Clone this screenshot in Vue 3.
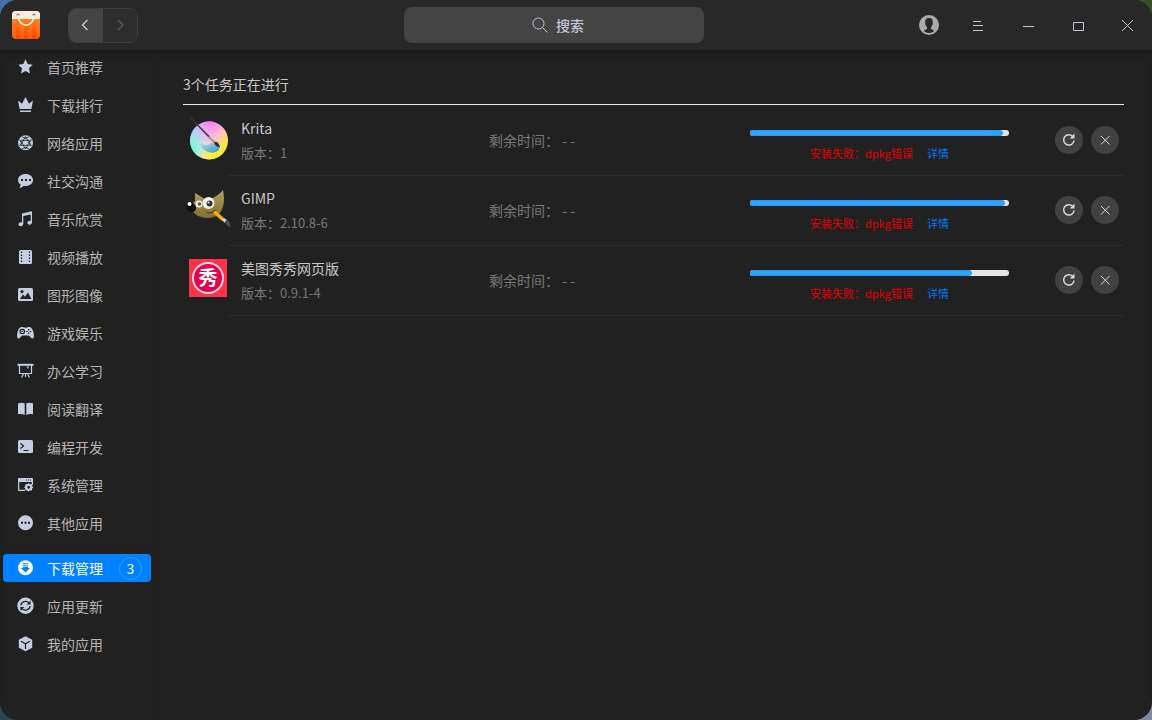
<script setup>
import { ref, reactive, computed } from 'vue';

// solid: filled shape, line: strokes, cut / hole: parts drawn in the row colour
const categories = [
  { id: 'home', name: '首页推荐', solid: 'M8.500 .3l2.200 4.800 5 .6-3.700 3.600 1 5.200-4.500-2.600L4 14.500l1-5.200L1.300 5.700l5-.6z' },
  { id: 'rank', name: '下载排行', solid: 'M1 3.600l4 3.200L8.500 0l3.500 6.800 4-3.200-1.600 8.400H2.600zM3 13.400h11v1.600H3z' },
  { id: 'network', name: '网络应用', solid: 'M8.500 .3a7.500 7.500 0 100 15 7.500 7.500 0 000-15z', cut: 'M8.500 1.500L13.400 10.300H3.600zM8.500 14.100L3.600 5.300h9.800zM2.500 4.500l2 3.300-2 3.300M14.500 4.500l-2 3.300 2 3.300M5 1.800l3.500 1.500L12 1.800M5 13.800l3.500-1.500 3.500 1.500', thin: true },
  { id: 'social', name: '社交沟通', solid: 'M8.500 1C4.300 1 1 3.600 1 7c0 1.800 1 3.500 2.600 4.600.1 1.200-.5 2.300-1.300 3.100 1.600.1 3-.6 4.100-1.800 5.500.8 9.600-1.900 9.600-5.900C16 3.600 12.700 1 8.500 1z', hole: 'M4 6h2v2H4zM8 6h2v2H8zM12 6h2v2h-2z' },
  { id: 'music', name: '音乐欣赏', solid: 'M5 2.400L15 .2v11c0 1.500-1 2.500-2.400 2.500-1.300 0-2.200-.8-2.200-1.900 0-1.300 1.500-2.300 3.300-2V3.500L6.300 5v7.500c0 1.500-1.200 2.700-2.700 2.700-1.300 0-2.100-.8-2.100-1.900C1.500 12 3.100 10.900 5 11.300z' },
  { id: 'video', name: '视频播放', solid: 'M3.500 1h10Q15 1 15 2.500v11q0 1.500-1.500 1.500h-10Q2 15 2 13.500v-11Q2 1 3.500 1z', cut: 'M4.500 2.500v12M12.500 2.500v12', dash: '1.500 1.500' },
  { id: 'image', name: '图形图像', solid: 'M2.500 1h12Q16 1 16 2.500v10q0 1.500-1.500 1.500h-12Q1 14 1 12.500v-10Q1 1 2.500 1z', hole: 'M5 3a1.600 1.600 0 100 3.200A1.600 1.600 0 005 3zM3 12l3-4.500 2 2.300 3-4.300 3.500 6.500z' },
  { id: 'game', name: '游戏娱乐', solid: 'M5 2c1 0 1.500.7 3.500.7S11 2 12 2c2.500 0 4 2.500 4.700 6.500.5 3 .3 5-1.500 5-1.500 0-2-3-4-3H5.800c-2 0-2.500 3-4 3-1.800 0-2-2-1.500-5C1 4.500 2.500 2 5 2z', cut: 'M5.300 4.300a2.200 2.200 0 100 4.400 2.200 2.200 0 000-4.400zM5.300 6v1M11.700 3.900v1.500M11.700 7.600v1.500M9.200 6.500h1.500M12.800 6.500h1.500' },
  { id: 'office', name: '办公学习', solid: 'M.5 .8h16v2H.5z', line: 'M2.500 2v8.500h12V2M8.500 11v3M6.500 11l-2 3.500M10.500 11l2 3.500M11 5.500V4H9.800' },
  { id: 'read', name: '阅读翻译', solid: 'M1 2.500C3 1.400 5.800 1.400 7.700 2.600v11.500C5.800 13 3 12.700 1 13.300zM16 2.500c-2-1.100-4.800-1.100-6.700.1v11.500c1.900-1.100 4.700-1.400 6.700-.8z' },
  { id: 'code', name: '编程开发', solid: 'M2.500 1h12Q16 1 16 2.500v10q0 1.500-1.500 1.500h-12Q1 14 1 12.500v-10Q1 1 2.500 1z', cut: 'M3.500 4.500l3 2.500-3 2.500M6.500 11.500h5' },
  { id: 'system', name: '系统管理', solid: 'M2 1h13q1 0 1 1v3H1V2q0-1 1-1zM11.700 6l1.300 1.200 1.900-.1.200 1.800 1.200 1.400-1.200 1.400-.2 1.800-1.900-.1-1.300 1.200-1.300-1.200-1.900.1-.2-1.800-1.200-1.400 1.200-1.400.2-1.800 1.900.1z', line: 'M1.700 4v9.300H8M15.400 4v4', hole: 'M11.700 8.900a1.400 1.400 0 100 2.800 1.400 1.400 0 000-2.800zM9 2.500h1v1H9zM11 2.500h1v1h-1zM13 2.500h1v1h-1z' },
  { id: 'other', name: '其他应用', solid: 'M8.500 .3a7.500 7.500 0 100 15 7.500 7.500 0 000-15z', hole: 'M4 6.800h2v2H4zM7.500 6.800h2v2h-2zM11 6.800h2v2h-2z' },
];

const manage = [
  { id: 'download', name: '下载管理', solid: 'M8.500 .3a7.500 7.500 0 100 15 7.500 7.500 0 000-15z', hole: 'M6 3.300h5v1H6zM6 5.200h5v1H6zM6 7h5v1h2l-4.500 4.500L4 8h2z' },
  { id: 'update', name: '应用更新', solid: 'M8.500 -.5a8.200 8.200 0 100 16.400 8.200 8.200 0 000-16.400z', cut: 'M3.800 7.300C4.300 3.600 9.300 1.900 12 4.800M13.200 8.100c-.5 3.700-5.500 5.400-8.200 2.500', hole: 'M13.500 2.500v4H9.700zM3.500 12.900v-4h3.800z' },
  { id: 'mine', name: '我的应用', solid: 'M8.500 .3l6.700 3.500v8L8.500 15.300l-6.700-3.500v-8z', cut: 'M4 5.300l4.500 2.500L13 5.300M8.500 7.800V13' },
];

const groups = [categories, manage];
const active = ref('download');
const keyword = ref('');

const tasks = reactive([
  { id: 'krita', name: 'Krita', version: '1', progress: 97.7 },
  { id: 'gimp', name: 'GIMP', version: '2.10.8-6', progress: 98.5 },
  { id: 'meitu', name: '美图秀秀网页版', version: '0.9.1-4', progress: 85.7 },
]);
const taskCount = computed(() => tasks.length);

const retry = (task) => {
  task.progress = 0;
}
const removeTask = (index) => {
  tasks.splice(index, 1);
}
</script>

<template>
  <div class="window">
    <header class="titlebar">
      <div class="left">
        <svg class="logo" viewBox="0 0 28 28">
          <defs>
            <linearGradient id="bag" x1="0" y1="0" x2="0" y2="1">
              <stop offset="0" stop-color="#ff9330" />
              <stop offset="1" stop-color="#ff5a0c" />
            </linearGradient>
            <linearGradient id="stripe" x1="0" y1="0" x2="0" y2="1">
              <stop offset="0" stop-color="#ff7e14" />
              <stop offset="1" stop-color="#ff4300" />
            </linearGradient>
          </defs>
          <rect width="28" height="28" rx="4" fill="url(#bag)" />
          <path d="M4 8h4v20H4zM12 8h4v20h-4zM20 8h4v20h-4z" fill="url(#stripe)" />
          <path d="M0 8V4q0-4 4-4h20q4 0 4 4v4z" fill="#faecdc" />
          <circle cx="6" cy="4" r="1.500" fill="#8f7b6c" />
          <circle cx="22" cy="4" r="1.500" fill="#8f7b6c" />
          <path d="M6 5c0 12 16 12 16 0" fill="none" stroke="#e8cdb4" stroke-width="1" />
          <path d="M6 4c0 13.500 16 13.500 16 0" fill="none" stroke="#fff8ee" stroke-width="1.500" />
        </svg>
        <div class="nav">
          <button type="button" aria-label="后退">
            <svg viewBox="0 0 12 12"><path d="M7.500 1l-5 5 5 5" /></svg>
          </button>
          <button type="button" aria-label="前进" disabled>
            <svg viewBox="0 0 12 12"><path d="M4 1l5 5-5 5" /></svg>
          </button>
        </div>
      </div>

      <label class="search">
        <svg viewBox="0 0 16 16"><circle cx="6.500" cy="6.500" r="5.500" /><path d="M10.500 10.500l5 5" /></svg>
        <input type="text" v-model="keyword" placeholder="搜索" aria-label="搜索">
      </label>

      <div class="controls">
        <button type="button" aria-label="账户">
          <svg class="avatar" viewBox="0 0 20 20">
            <circle cx="10" cy="10" r="10" fill="#aaaaaa" />
            <path d="M10 3C7 3 6 5 6.300 7.500 5.800 8.500 6.300 10 7 10.300c.3 1.500 1 2 1.300 2.700-.3 1.500-2.300 1.600-3.500 3C6.300 17.300 8 18 10 18s3.700-.7 5.200-2c-1.200-1.400-3.200-1.500-3.500-3 .3-.7 1-1.200 1.300-2.700.7-.3 1.200-1.800.7-2.800C14 5 13 3 10 3z" fill="#282828" />
          </svg>
        </button>
        <button type="button" aria-label="菜单">
          <svg viewBox="0 -1 16 16"><path d="M4 3.500h8M4 7.500h10M4 12.500h10" /></svg>
        </button>
        <button type="button" aria-label="最小化">
          <svg viewBox="0 -1 16 16"><path d="M4 8.500h11" /></svg>
        </button>
        <button type="button" aria-label="最大化">
          <svg viewBox="0 -1 16 16"><path d="M4.500 4.500h10v8h-10z" /></svg>
        </button>
        <button type="button" aria-label="关闭">
          <svg viewBox="0 -1 16 16"><path d="M3 2l11 11M14 2L3 13" /></svg>
        </button>
      </div>
    </header>

    <div class="body">
      <nav class="sidebar">
        <ul v-for="(group, index) in groups" :key="index">
          <li v-for="item in group" :key="item.id">
            <button type="button" class="entry" :class="{ active: active === item.id }" @click="active = item.id">
              <svg viewBox="0 -1 18 18">
                <path v-if="item.solid" class="solid" :d="item.solid" />
                <path v-if="item.line" class="line" :d="item.line" />
                <path v-if="item.cut" class="cut" :class="{ thin: item.thin }" :d="item.cut" :stroke-dasharray="item.dash" />
                <path v-if="item.hole" class="hole" :d="item.hole" />
              </svg>
              <span>{{ item.name }}</span>
              <span v-if="item.id === 'download' && taskCount" class="badge">{{ taskCount }}</span>
            </button>
          </li>
        </ul>
      </nav>

      <main class="content">
        <h1>{{ taskCount }}个任务正在进行</h1>
        <ul class="tasks">
          <li v-for="(task, index) in tasks" :key="task.id" class="task">
            <svg v-if="task.id === 'krita'" class="app-icon" viewBox="0 0 48 48">
              <defs>
                <linearGradient id="kritaBase" x1="0" y1=".3" x2="1" y2=".8">
                  <stop offset="0" stop-color="#8bdcff" />
                  <stop offset=".35" stop-color="#d8dcee" />
                  <stop offset=".65" stop-color="#ffd9a8" />
                  <stop offset="1" stop-color="#fff000" />
                </linearGradient>
                <radialGradient id="kritaPink" cx=".55" cy="0" r=".65">
                  <stop offset="0" stop-color="#ff74f4" />
                  <stop offset="1" stop-color="#ff9cf0" stop-opacity="0" />
                </radialGradient>
                <radialGradient id="kritaMint" cx="0" cy=".75" r=".5">
                  <stop offset="0" stop-color="#5cffd0" />
                  <stop offset="1" stop-color="#8cffd0" stop-opacity="0" />
                </radialGradient>
                <radialGradient id="kritaYellow" cx=".65" cy="1" r=".5">
                  <stop offset="0" stop-color="#fff500" />
                  <stop offset="1" stop-color="#fff36a" stop-opacity="0" />
                </radialGradient>
                <linearGradient id="kritaPaint" x1="0" y1="0" x2="1" y2="1">
                  <stop offset="0" stop-color="#c4d8e8" />
                  <stop offset="1" stop-color="#2a9bd0" />
                </linearGradient>
              </defs>
              <circle cx="26" cy="24.500" r="19" fill="url(#kritaBase)" />
              <circle cx="26" cy="24.500" r="19" fill="url(#kritaMint)" />
              <circle cx="26" cy="24.500" r="19" fill="url(#kritaYellow)" />
              <circle cx="26" cy="24.500" r="19" fill="url(#kritaPink)" />
              <path d="M17 26c1 3 7 4 10 2 2-2 5-2 7 0l3 3c-1 6-9 7-14 4-4-2-6-5-6-9z" fill="url(#kritaPaint)" />
              <path d="M6 1l2 .5 19 19-1 1.500z" fill="#49353b" />
              <path d="M26 20l6 5-1.500 2-5.500-5.500z" fill="#a09691" />
              <path d="M31 26c3-1 5 1 6 5-3 0-5-1-6-5z" fill="#392d38" />
            </svg>

            <svg v-else-if="task.id === 'gimp'" class="app-icon" viewBox="0 0 48 48">
              <defs>
                <linearGradient id="gimpFur" x1="0" y1="0" x2="0" y2="1">
                  <stop offset="0" stop-color="#b4a25f" />
                  <stop offset="1" stop-color="#806e31" />
                </linearGradient>
              </defs>
              <path d="M12 7l10 6c6 1 13-3 18-9 2 10 1 19-4 24-6 6-19 5-25-1-3-3-4-6-3-9l4-3z" fill="url(#gimpFur)" />
              <path d="M3 19c1-3 4-4 7-2 4 3 4 8 0 9-4 1-7-3-7-7z" fill="#0e1113" />
              <circle cx="6.500" cy="18" r="2" fill="#ffffff" />
              <circle cx="16" cy="18" r="3.500" fill="#eeeeec" />
              <circle cx="16.500" cy="18" r="1.800" fill="#555753" />
              <circle cx="25.500" cy="17" r="6" fill="#f2f3f1" />
              <circle cx="26.500" cy="17.500" r="3" fill="#2e3436" />
              <circle cx="25.500" cy="16.500" r="1" fill="#ffffff" />
              <path d="M23 26c4 2 7 1 10-2" fill="none" stroke="#4d431f" stroke-width="1.200" />
              <path d="M30 27l2.500-2.500 8.500 7.500-2 3z" fill="#f3ac13" />
              <path d="M39 34l2-2 3 2-2 3z" fill="#dedede" />
              <path d="M42 35c3-2 5 1 6 6-4-1-6-3-6-6z" fill="#4c5055" />
            </svg>

            <svg v-else class="app-icon" viewBox="0 0 48 48">
              <rect x="6" y="3" width="38" height="38" fill="#ff3347" />
              <circle cx="25" cy="22" r="15" fill="#e5004f" stroke="#ffdce2" stroke-width="2" />
              <text x="25" y="29" text-anchor="middle">秀</text>
            </svg>

            <div class="row">
              <div class="info">
                <h2>{{ task.name }}</h2>
                <p>版本：{{ task.version }}</p>
              </div>
              <div class="remain">剩余时间： - -</div>
              <div class="status">
                <div class="bar" role="progressbar" :aria-valuenow="task.progress" aria-valuemin="0" aria-valuemax="100">
                  <div class="fill" :style="{ width: task.progress + '%' }"></div>
                </div>
                <div class="message">
                  <span>安装失败：dpkg错误</span>
                  <a href="#">详情</a>
                </div>
              </div>
              <div class="actions">
                <button type="button" aria-label="重试" @click="retry(task)">
                  <svg viewBox="0 0 14 14"><path d="M12 7.500A5.200 5.200 0 1 1 10.500 3.200" /><path class="tip" d="M12.500 .5v5H7.800z" /></svg>
                </button>
                <button type="button" aria-label="移除" @click="removeTask(index)">
                  <svg viewBox="0 0 14 14"><path class="thin" d="M3 3l8.500 8.500M11.500 3L3 11.500" /></svg>
                </button>
              </div>
            </div>
          </li>
        </ul>
      </main>
    </div>
  </div>
</template>

<style>
body {
  margin: 0;
  background:
    linear-gradient(90deg, #4070a8 50%, #3c4f24 50%) top / 100% 50% no-repeat,
    linear-gradient(90deg, #29474f 50%, #7c8b9e 50%) bottom / 100% 50% no-repeat;
}
</style>

<style scoped>
.window {
  display: flex;
  flex-direction: column;
  min-height: 100vh;
  border-radius: 18px;
  overflow: hidden;
  background: #212121;
  color: #c0c6d4;
  font-family: "Noto Sans CJK SC", sans-serif;
  font-size: 14px;
  line-height: 20px;
}

button {
  padding: 0;
  border: none;
  background: none;
  color: inherit;
  font: inherit;
  cursor: pointer;
}

ul {
  margin: 0;
  padding: 0;
  list-style: none;
}

svg {
  display: block;
  flex-shrink: 0;
}

.titlebar {
  display: grid;
  grid-template-columns: 404fr 300px 448fr;
  align-items: center;
  height: 50px;
  background: #282828;
}

.left {
  display: flex;
  align-items: center;
  gap: 28px;
  padding-left: 12px;
}

.logo {
  width: 28px;
  height: 28px;
}

.nav {
  display: flex;
  box-sizing: border-box;
  width: 70px;
  height: 35px;
  border: 1px solid #3d3d3d;
  border-radius: 8px;
  overflow: hidden;
}

.nav button {
  display: flex;
  flex: 1;
  align-items: center;
  justify-content: center;
  background: #444444;
}

.nav button:disabled {
  background: #2d2d2d;
  color: #555555;
}

.nav svg {
  width: 12px;
  height: 12px;
  fill: none;
  stroke: currentColor;
  stroke-width: 1.5;
}

.search {
  display: flex;
  align-items: center;
  justify-content: center;
  gap: 8px;
  box-sizing: border-box;
  height: 36px;
  padding-left: 8px;
  border-radius: 8px;
  background: #444444;
}

.search svg {
  width: 16px;
  height: 16px;
  fill: none;
  stroke: #c0c6d4;
}

.search input {
  field-sizing: content;
  min-width: 28px;
  max-width: 240px;
  padding: 0;
  border: none;
  outline: none;
  background: none;
  color: #c0c6d4;
  font: inherit;
  font-weight: 500;
}

.search input::placeholder {
  color: #c0c6d4;
  opacity: 1;
}

.controls {
  display: flex;
  justify-content: flex-end;
}

.controls button {
  display: flex;
  align-items: center;
  justify-content: center;
  width: 50px;
  height: 50px;
}

.controls svg {
  width: 16px;
  height: 16px;
  fill: none;
  stroke: #c0c6d4;
}

.controls .avatar {
  width: 20px;
  height: 20px;
  margin-left: 4px;
  stroke: none;
}

.body {
  display: flex;
  flex: 1;
  box-shadow: inset 0 6px 6px -4px #181818;
}

.sidebar {
  box-sizing: border-box;
  width: 155px;
  padding-top: 3px;
  border-right: 1px solid #1e1e1e;
}

.sidebar ul {
  display: flex;
  flex-direction: column;
  gap: 10px;
}

.sidebar ul + ul {
  margin-top: 10px;
  padding-top: 6px;
  border-top: 1px solid #1e1e1e;
}

.sidebar li {
  display: flex;
  padding: 0 3px;
}

.entry {
  --back: #212121;
  display: flex;
  flex: 1;
  align-items: center;
  gap: 12px;
  height: 28px;
  padding: 0 9px 0 14px;
  border-radius: 4px;
  color: #b4b4b4;
}

.entry svg {
  width: 18px;
  height: 18px;
  overflow: visible;
  color: #c5cde0;
}

.entry.active {
  --back: #0081ff;
  background: #0081ff;
  color: #ffffff;
}

.entry.active svg {
  color: #ffffff;
}

.solid {
  fill: currentColor;
}

.line {
  fill: none;
  stroke: currentColor;
  stroke-width: 1.2;
}

.cut {
  fill: none;
  stroke: var(--back);
  stroke-width: 1.2;
}

.cut.thin {
  stroke-width: 0.8;
}

.hole {
  fill: var(--back);
}

.badge {
  box-sizing: border-box;
  width: 23px;
  height: 23px;
  margin-left: auto;
  border: 1px solid #3399ff;
  border-radius: 50%;
  text-align: center;
}

.content {
  flex: 1;
  padding: 24px 28px;
}

h1 {
  margin: 0;
  padding-bottom: 10px;
  border-bottom: 1px solid #e8e8e8;
  color: #c8c8c8;
  font-size: 14px;
  font-weight: 400;
}

.tasks {
  padding-top: 1px;
}

.task {
  display: flex;
}

.app-icon {
  width: 48px;
  height: 48px;
  margin: 10px -3px 0 0;
}

.app-icon text {
  fill: #ffffff;
  font-size: 19px;
  font-weight: 700;
}

.row {
  display: grid;
  flex: 1;
  grid-template-columns: 248fr 261fr 259fr 115px;
  box-sizing: border-box;
  height: 70px;
  padding: 0 0 2px 13px;
  border-bottom: 1px solid #2c2c2c;
}

.info {
  padding-top: 12px;
}

.info h2 {
  margin: 0 0 5px;
  color: #c8c8c8;
  font-size: 14px;
  font-weight: 400;
}

.info p {
  margin: 0;
  color: #777777;
  font-size: 13px;
}

.remain {
  align-self: center;
  color: #777777;
}

.status {
  padding-top: 24px;
}

.bar {
  height: 6px;
  border-radius: 3px;
  background: #e5e5e5;
  overflow: hidden;
}

.fill {
  box-sizing: border-box;
  height: 6px;
  border: 1px solid #2c90f8;
  border-radius: 3px;
  background: #2ca7f8;
}

.message {
  display: flex;
  justify-content: center;
  gap: 14px;
  margin-top: 7px;
  color: #e60000;
  font-size: 11px;
}

.message a {
  color: #0078f0;
  text-decoration: none;
}

.actions {
  display: flex;
  align-items: center;
  justify-content: flex-end;
  gap: 8px;
  padding-right: 5px;
}

.actions button {
  display: flex;
  align-items: center;
  justify-content: center;
  width: 28px;
  height: 28px;
  border-radius: 50%;
  background: #414141;
}

.actions svg {
  width: 14px;
  height: 14px;
  fill: none;
  stroke: #d8d8d8;
  stroke-width: 1.5;
}

.actions .tip {
  fill: #d8d8d8;
  stroke: none;
}

.actions .thin {
  stroke-width: 1;
}
</style>
